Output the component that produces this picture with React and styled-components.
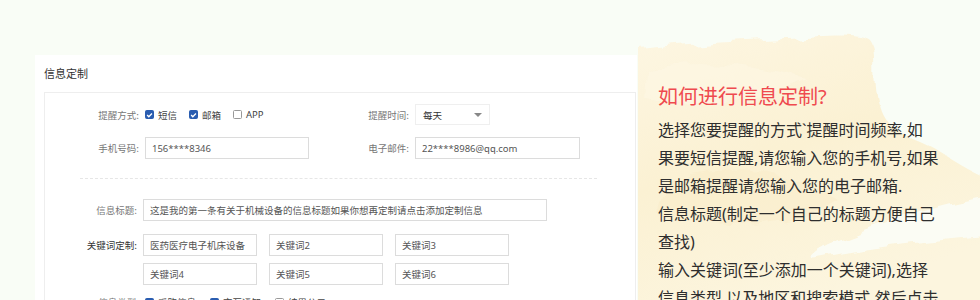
import React from "react";
import styled, { createGlobalStyle } from "styled-components";

const GlobalStyle = createGlobalStyle`
  html, body {
    margin: 0;
    padding: 0;
  }
  body {
    background: #f9fdf6;
    font-family: "Noto Sans", "Noto Sans CJK SC", sans-serif;
  }
`;

const Check = ({ checked }) => (
  <CheckBox $checked={checked}>
    {checked && (
      <svg width="8" height="8" viewBox="0 0 8 8">
        <path d="M1.3 4.1 L3.2 6 L6.8 2.2" fill="none" stroke="#fff" strokeWidth="1.5" />
      </svg>
    )}
  </CheckBox>
);

const Wash = () => (
  <WashSvg viewBox="0 0 342 300" preserveAspectRatio="none">
    <defs>
      <filter id="rough" x="-10%" y="-10%" width="120%" height="120%">
        <feTurbulence type="fractalNoise" baseFrequency="0.035" numOctaves="3" result="n" />
        <feDisplacementMap in="SourceGraphic" in2="n" scale="14" />
      </filter>
      <linearGradient id="paint" x1="0" y1="0" x2="0.4" y2="1">
        <stop offset="0" stopColor="#fdf6e2" />
        <stop offset="0.5" stopColor="#fbf1d3" />
        <stop offset="1" stopColor="#fcf5de" />
      </linearGradient>
    </defs>
    <g filter="url(#rough)">
      <path
        d="M-6,50 C40,44 90,40 150,38 C190,36 215,33 232,40 C242,50 236,72 240,96 C244,120 252,130 282,142 C306,152 322,168 350,178 L350,310 L-6,310 Z"
        fill="url(#paint)"
      />
      <path
        d="M350,196 C300,206 240,222 190,244 C170,254 168,260 180,258 C240,246 300,240 350,236 Z"
        fill="#fbfdf6"
        opacity="0.9"
      />
      <path d="M30,180 C80,160 150,170 200,200 C160,230 80,230 20,215 Z" fill="#f8e8bf" opacity="0.3" />
      <path d="M10,70 C60,60 120,66 170,80 C130,100 60,110 8,100 Z" fill="#fdf7e6" opacity="0.5" />
    </g>
  </WashSvg>
);

const App = () => {
  return (
    <>
      <GlobalStyle />
      <Page>
        <LeftSide>
          <Panel>
            <PanelTitle>信息定制</PanelTitle>
            <FormBox>
              <Row $h={21}>
                <Field>
                  <Label>提醒方式:</Label>
                  <CheckGroup>
                    <CheckItem>
                      <Check checked />
                      短信
                    </CheckItem>
                    <CheckItem>
                      <Check checked />
                      邮箱
                    </CheckItem>
                    <CheckItem>
                      <Check />
                      APP
                    </CheckItem>
                  </CheckGroup>
                </Field>
                <Field>
                  <Label>提醒时间:</Label>
                  <Select>
                    每天
                    <Caret />
                  </Select>
                </Field>
              </Row>
              <Row $h={22} $mt={12}>
                <Field>
                  <Label>手机号码:</Label>
                  <TextInput $w={164} readOnly value="156****8346" />
                </Field>
                <Field>
                  <Label>电子邮件:</Label>
                  <TextInput $w={165} readOnly value="22****8986@qq.com" />
                </Field>
              </Row>
              <Divider />
              <Field>
                <Label $w={98}>信息标题:</Label>
                <TextInput
                  $w={404}
                  readOnly
                  value="这是我的第一条有关于机械设备的信息标题如果你想再定制请点击添加定制信息"
                />
              </Field>
              <KeyRow>
                <Label $w={98} $strong>
                  关键词定制:
                </Label>
                <KeyGrid>
                  <TextInput readOnly value="医药医疗电子机床设备" />
                  <TextInput readOnly value="关键词2" />
                  <TextInput readOnly value="关键词3" />
                  <TextInput readOnly value="关键词4" />
                  <TextInput readOnly value="关键词5" />
                  <TextInput readOnly value="关键词6" />
                </KeyGrid>
              </KeyRow>
              <TypeRow>
                <Label>信息类型:</Label>
                <CheckGroup $gap={14}>
                  <CheckItem>
                    <Check checked />
                    采购信息
                  </CheckItem>
                  <CheckItem>
                    <Check checked />
                    交互通知
                  </CheckItem>
                  <CheckItem>
                    <Check />
                    结果公示
                  </CheckItem>
                </CheckGroup>
              </TypeRow>
            </FormBox>
          </Panel>
        </LeftSide>
        <InfoSide>
          <Wash />
          <InfoTitle>如何进行信息定制?</InfoTitle>
          <InfoText>
            选择您要提醒的方式`提醒时间频率,如
            <br />
            果要短信提醒,请您输入您的手机号,如果
            <br />
            是邮箱提醒请您输入您的电子邮箱.
            <br />
            信息标题(制定一个自己的标题方便自己
            <br />
            查找)
            <br />
            输入关键词(至少添加一个关键词),选择
            <br />
            信息类型,以及地区和搜索模式,然后点击
          </InfoText>
        </InfoSide>
      </Page>
    </>
  );
};

const Page = styled.div`
  display: flex;
  width: 980px;
  height: 300px;
  overflow: hidden;
  background: #f9fdf6;
`;

const LeftSide = styled.div`
  width: 638px;
  flex-shrink: 0;
  padding: 55px 0 0 35px;
  box-sizing: border-box;
`;

const Panel = styled.div`
  width: 602px;
  height: 245px;
  background: #fff;
  padding: 0 1px 0 9px;
  box-sizing: border-box;
  display: flex;
  flex-direction: column;
  overflow: hidden;
`;

const PanelTitle = styled.div`
  height: 37px;
  line-height: 37px;
  font-family: "Noto Sans CJK SC", sans-serif;
  font-size: 11px;
  color: #333;
`;

const FormBox = styled.div`
  flex: 1;
  border: 1px solid #eeeeee;
  border-bottom: none;
  padding-top: 11px;
`;

const Row = styled.div`
  display: grid;
  grid-template-columns: 270px 1fr;
  height: ${(p) => p.$h}px;
  margin-top: ${(p) => p.$mt || 0}px;
`;

const Field = styled.div`
  display: flex;
  align-items: center;
`;

const Label = styled.div`
  width: ${(p) => p.$w || 100}px;
  flex-shrink: 0;
  box-sizing: border-box;
  padding-right: 6px;
  text-align: right;
  font-family: "Noto Sans CJK SC", sans-serif;
  font-size: 9.5px;
  color: ${(p) => (p.$strong ? "#333" : "#777")};
`;

const CheckGroup = styled.div`
  display: flex;
  align-items: center;
  gap: ${(p) => p.$gap || 12}px;
`;

const CheckItem = styled.div`
  display: flex;
  align-items: center;
  gap: 4px;
  font-family: "Noto Sans", "Noto Sans CJK SC", sans-serif;
  font-size: 9.5px;
  color: #444;
`;

const CheckBox = styled.span`
  display: inline-flex;
  align-items: center;
  justify-content: center;
  width: 9px;
  height: 9px;
  box-sizing: border-box;
  border-radius: 1.5px;
  background: ${(p) => (p.$checked ? "#2a5db0" : "#fff")};
  border: 1px solid ${(p) => (p.$checked ? "#2a5db0" : "#999")};
`;

const Select = styled.div`
  position: relative;
  width: 75px;
  height: 21px;
  box-sizing: border-box;
  border: 1px solid #efefef;
  padding-left: 7px;
  display: flex;
  align-items: center;
  font-family: "Noto Sans CJK SC", sans-serif;
  font-size: 9.5px;
  color: #333;
`;

const Caret = styled.span`
  position: absolute;
  right: 7px;
  top: 8px;
  width: 0;
  height: 0;
  border-left: 4px solid transparent;
  border-right: 4px solid transparent;
  border-top: 4px solid #888;
`;

const TextInput = styled.input`
  width: ${(p) => (p.$w ? `${p.$w}px` : "100%")};
  height: 22px;
  box-sizing: border-box;
  border: 1px solid #dcdcdc;
  border-radius: 0;
  padding: 0 6px;
  margin: 0;
  outline: none;
  background: #fff;
  font-family: "Noto Sans", "Noto Sans CJK SC", sans-serif;
  font-size: 9.5px;
  color: #555;
`;

const Divider = styled.div`
  margin: 19px 38px 20px 35px;
  border-top: 1px dashed #e6e6e6;
`;

const KeyRow = styled.div`
  display: flex;
  align-items: flex-start;
  margin-top: 13px;

  & > ${Label} {
    line-height: 22px;
  }
`;

const KeyGrid = styled.div`
  display: grid;
  grid-template-columns: repeat(3, 114px);
  column-gap: 12px;
  row-gap: 7px;
`;

const TypeRow = styled.div`
  display: flex;
  align-items: center;
  margin-top: 10px;
`;

const InfoSide = styled.div`
  position: relative;
  flex: 1;
  padding: 81px 0 0 20px;
  box-sizing: border-box;
`;

const WashSvg = styled.svg`
  position: absolute;
  left: 0;
  top: 0;
  width: 100%;
  height: 100%;
  z-index: 0;
`;

const InfoTitle = styled.div`
  position: relative;
  z-index: 1;
  font-family: "Noto Sans", "Noto Sans CJK SC", sans-serif;
  font-size: 20px;
  line-height: 32px;
  color: #ef4a4f;
  white-space: nowrap;
`;

const InfoText = styled.div`
  position: relative;
  z-index: 1;
  margin-top: 3px;
  font-family: "Noto Sans", "Noto Sans CJK SC", sans-serif;
  font-size: 16px;
  line-height: 28px;
  color: #2e2e2e;
  white-space: nowrap;
`;

export default App;
